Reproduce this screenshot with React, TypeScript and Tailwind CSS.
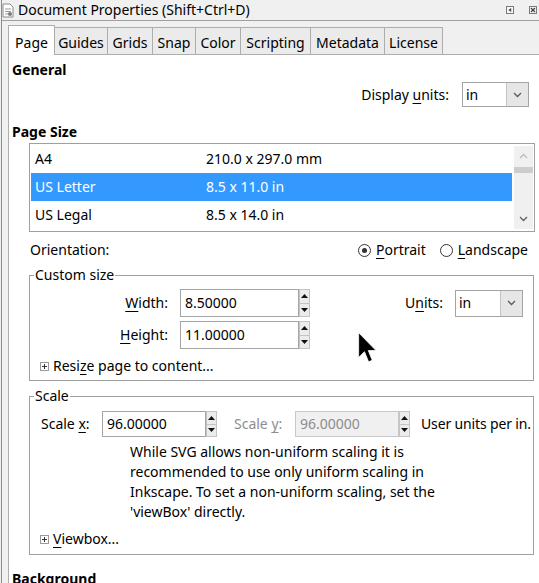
import React from 'react';

const U = ({ children }: { children: React.ReactNode }) => (
    <span className="underline decoration-1 underline-offset-[3px]">{children}</span>
);

const ChevronDown = () => (
    <svg width="9" height="6" viewBox="0 0 9 6">
        <path d="M1 1 L4.5 4.5 L8 1" fill="none" stroke="currentColor" strokeWidth="1.3" />
    </svg>
);

const ChevronUp = () => (
    <svg width="9" height="6" viewBox="0 0 9 6">
        <path d="M1 5 L4.5 1.5 L8 5" fill="none" stroke="currentColor" strokeWidth="1.3" />
    </svg>
);

const Combo = ({ value, className }: { value: string; className: string }) => (
    <div className={`flex border border-[#a5a5a5] bg-white ${className}`}>
        <span className="flex flex-1 items-center pl-[3px]">{value}</span>
        <span className="flex w-[22px] items-center justify-center border-l border-[#c4c4c4] bg-[#e6e6e6] text-[#5a5a5a]">
            <ChevronDown />
        </span>
    </div>
);

const Spin = () => (
    <div className="flex w-[11px] flex-col bg-[#f0f0f0]">
        <div className="flex flex-1 items-center justify-center border border-[#c4c4c4] bg-[#ececec]">
            <svg width="7" height="4" viewBox="0 0 7 4">
                <path d="M0 4 L3.5 0 L7 4 Z" fill="#111" />
            </svg>
        </div>
        <div className="flex flex-1 items-center justify-center border border-t-0 border-[#c4c4c4] bg-[#ececec]">
            <svg width="7" height="4" viewBox="0 0 7 4">
                <path d="M0 0 L7 0 L3.5 4 Z" fill="#111" />
            </svg>
        </div>
    </div>
);

interface FieldProps {
    value: string;
    className: string;
    disabled?: boolean;
}

const SpinField = ({ value, className, disabled }: FieldProps) => (
    <div className="flex">
        <div
            className={`flex items-center pl-[4px] ${className} ${
                disabled ? 'border border-[#c8c8c8] bg-[#f0f0f0] text-[#8d8d8d]' : 'border border-[#a5a5a5] bg-white'
            }`}
        >
            {value}
        </div>
        <Spin />
    </div>
);

const Radio = ({ checked }: { checked?: boolean }) => (
    <span className="flex h-[13px] w-[13px] items-center justify-center rounded-full border border-[#333] bg-white">
        {checked && <span className="h-[5px] w-[5px] rounded-full bg-[#333]" />}
    </span>
);

const Expander = () => (
    <svg width="9" height="9" viewBox="0 0 9 9">
        <rect x="0.5" y="0.5" width="8" height="8" fill="#fff" stroke="#9a9a9a" />
        <path d="M2 4.5 H7 M4.5 2 V7" stroke="#333" strokeWidth="1" />
    </svg>
);

const tabs = [
    { label: 'Guides', w: 'w-[53px]' },
    { label: 'Grids', w: 'w-[45px]' },
    { label: 'Snap', w: 'w-[43px]' },
    { label: 'Color', w: 'w-[45px]' },
    { label: 'Scripting', w: 'w-[70px]' },
    { label: 'Metadata', w: 'w-[74px]' },
    { label: 'License', w: 'w-[58px]' },
];

const pageSizes = [
    ['A4', '210.0 x 297.0 mm'],
    ['US Letter', '8.5 x 11.0 in'],
    ['US Legal', '8.5 x 14.0 in'],
];

export default function App() {
    return (
        <div className="relative h-[583px] w-[539px] overflow-hidden bg-[#f0f0f0] font-['Noto_Sans',sans-serif] text-[14px] leading-[20px] text-black">
            <div className="ml-px flex h-full flex-col border-l border-[#8c8c8c]">
                {/* Title bar */}
                <div className="flex h-[21px] shrink-0 items-center border-b border-[#a0a0a0]">
                    <svg width="12" height="15" viewBox="0 0 12 15">
                        <path d="M1 1 H8 L11 4 V14 H1 Z" fill="#fff" stroke="#8a8a8a" />
                        <path d="M3 6 H9 M3 8.5 H9 M3 11 H7" stroke="#9a9a9a" />
                        <circle cx="8" cy="11" r="2" fill="#7d7d7d" />
                    </svg>
                    <span className="ml-[4px]">Document Properties (Shift+Ctrl+D)</span>
                    <div className="ml-auto flex items-center gap-[15px] pr-[2px]">
                        <svg width="8" height="8" viewBox="0 0 8 8">
                            <rect x="0.5" y="0.5" width="7" height="7" fill="#f7f7f7" stroke="#7a7a7a" />
                            <path d="M5.2 2 L2.4 4 L5.2 6 Z" fill="#444" />
                        </svg>
                        <svg width="8" height="8" viewBox="0 0 8 8">
                            <rect x="0.5" y="0.5" width="7" height="7" fill="#f7f7f7" stroke="#7a7a7a" />
                            <path d="M2 2 L6 6 M6 2 L2 6" stroke="#444" strokeWidth="1.3" />
                        </svg>
                    </div>
                </div>

                {/* Tabs */}
                <div className="ml-[6px] flex h-[34px] shrink-0 items-end border-b border-[#adadad]">
                    <div className="-mb-px flex h-[30px] w-[47px] items-end justify-center border-x border-t border-[#adadad] bg-white pb-[2px]">
                        Page
                    </div>
                    {tabs.map((t) => (
                        <div
                            key={t.label}
                            className={`flex h-[27px] items-end justify-center border-r border-t border-[#adadad] bg-[#ebebeb] pb-[1px] ${t.w}`}
                        >
                            {t.label}
                        </div>
                    ))}
                </div>

                {/* Page content */}
                <div className="ml-[6px] flex-1 border-l border-[#adadad] bg-white">
                    <div className="pl-[3px] pt-[5px] font-bold">General</div>

                    <div className="mt-[2px] flex items-center justify-end pr-[10px]">
                        <span>
                            Display <U>u</U>nits:
                        </span>
                        <Combo value="in" className="ml-[13px] h-[25px] w-[67px]" />
                    </div>

                    <div className="mt-[15px] pl-[3px] font-bold">Page Size</div>

                    {/* Page size list */}
                    <div className="ml-[20px] mt-[1px] flex h-[89px] w-[506px] border border-[#a0a0a0]">
                        <div className="flex-1 pl-px pt-px">
                            {pageSizes.map(([name, size], i) => (
                                <div
                                    key={name}
                                    className={`flex h-[28px] items-center pl-[4px] ${i === 1 ? 'bg-[#3399ff] text-white' : ''}`}
                                >
                                    <span className="w-[171px]">{name}</span>
                                    <span>{size}</span>
                                </div>
                            ))}
                        </div>
                        <div className="my-[2px] ml-[2px] mr-px flex w-[19px] flex-col bg-[#f0f0f0]">
                            <div className="flex h-[20px] items-center justify-center text-[#bdbdbd]">
                                <ChevronUp />
                            </div>
                            <div className="mt-px h-[6px] w-full bg-[#cdcdcd]" />
                            <div className="flex-1" />
                            <div className="flex h-[20px] items-center justify-center text-[#606060]">
                                <ChevronDown />
                            </div>
                        </div>
                    </div>

                    {/* Orientation */}
                    <div className="mt-[8px] flex h-[20px] items-center pl-[21px] pr-[11px]">
                        <span>Orientation:</span>
                        <div className="ml-auto flex items-center">
                            <Radio checked />
                            <span className="ml-[5px]">
                                <U>P</U>ortrait
                            </span>
                            <span className="ml-[14px]">
                                <Radio />
                            </span>
                            <span className="ml-[5px]">
                                <U>L</U>andscape
                            </span>
                        </div>
                    </div>

                    {/* Custom size */}
                    <fieldset className="ml-[20px] mt-[5px] w-[505px] border border-[#a0a0a0]">
                        <legend className="ml-[4px] px-px">Custom size</legend>
                        <div className="pb-[4px] pt-[4px]">
                            <div className="flex items-center pr-[10px]">
                                <span className="w-[138px] text-right">
                                    <U>W</U>idth:
                                </span>
                                <div className="ml-[12px]">
                                    <SpinField value="8.50000" className="h-[28px] w-[119px]" />
                                </div>
                                <span className="ml-auto">
                                    U<U>n</U>its:
                                </span>
                                <Combo value="in" className="ml-[12px] h-[27px] w-[68px]" />
                            </div>
                            <div className="mt-[4px] flex items-center">
                                <span className="w-[138px] text-right">
                                    <U>H</U>eight:
                                </span>
                                <div className="ml-[12px]">
                                    <SpinField value="11.00000" className="h-[28px] w-[119px]" />
                                </div>
                            </div>
                            <div className="mt-[7px] flex h-[20px] items-center pl-[10px]">
                                <Expander />
                                <span className="ml-[4px]">
                                    Resi<U>z</U>e page to content...
                                </span>
                            </div>
                        </div>
                    </fieldset>

                    {/* Scale */}
                    <fieldset className="ml-[20px] mt-[5px] w-[505px] border border-[#a0a0a0]">
                        <legend className="ml-[4px] px-px">Scale</legend>
                        <div className="pb-[5px] pt-[5px]">
                            <div className="flex items-center whitespace-nowrap pl-[11px]">
                                <span className="w-[61px]">
                                    Scale <U>x</U>:
                                </span>
                                <SpinField value="96.00000" className="h-[26px] w-[104px]" />
                                <span className="ml-[17px] w-[61px] text-[#8d8d8d]">
                                    Scale <U>y</U>:
                                </span>
                                <SpinField value="96.00000" className="h-[26px] w-[104px]" disabled />
                                <span className="ml-[11px] tracking-[-0.15px]">User units per in.</span>
                            </div>
                            <p className="mt-[5px] pl-[100px]">
                                While SVG allows non-uniform scaling it is
                                <br />
                                recommended to use only uniform scaling in
                                <br />
                                Inkscape. To set a non-uniform scaling, set the
                                <br />
                                'viewBox' directly.
                            </p>
                            <div className="mt-[7px] flex h-[20px] items-center pl-[10px]">
                                <Expander />
                                <span className="ml-[4px]">
                                    <U>V</U>iewbox...
                                </span>
                            </div>
                        </div>
                    </fieldset>

                    <div className="mt-[14px] pl-[3px] font-bold">Background</div>
                </div>
            </div>

            {/* Mouse pointer */}
            <svg className="absolute left-[358px] top-[332px]" width="19" height="31" viewBox="0 0 12 19.5">
                <path
                    d="M0.4 0.4 L0.4 16 L4.1 12.4 L6.7 18.8 L9 17.8 L6.5 11.7 L11.4 11.7 Z"
                    fill="#000"
                    stroke="#fff"
                    strokeWidth="0.5"
                />
            </svg>
        </div>
    );
}
